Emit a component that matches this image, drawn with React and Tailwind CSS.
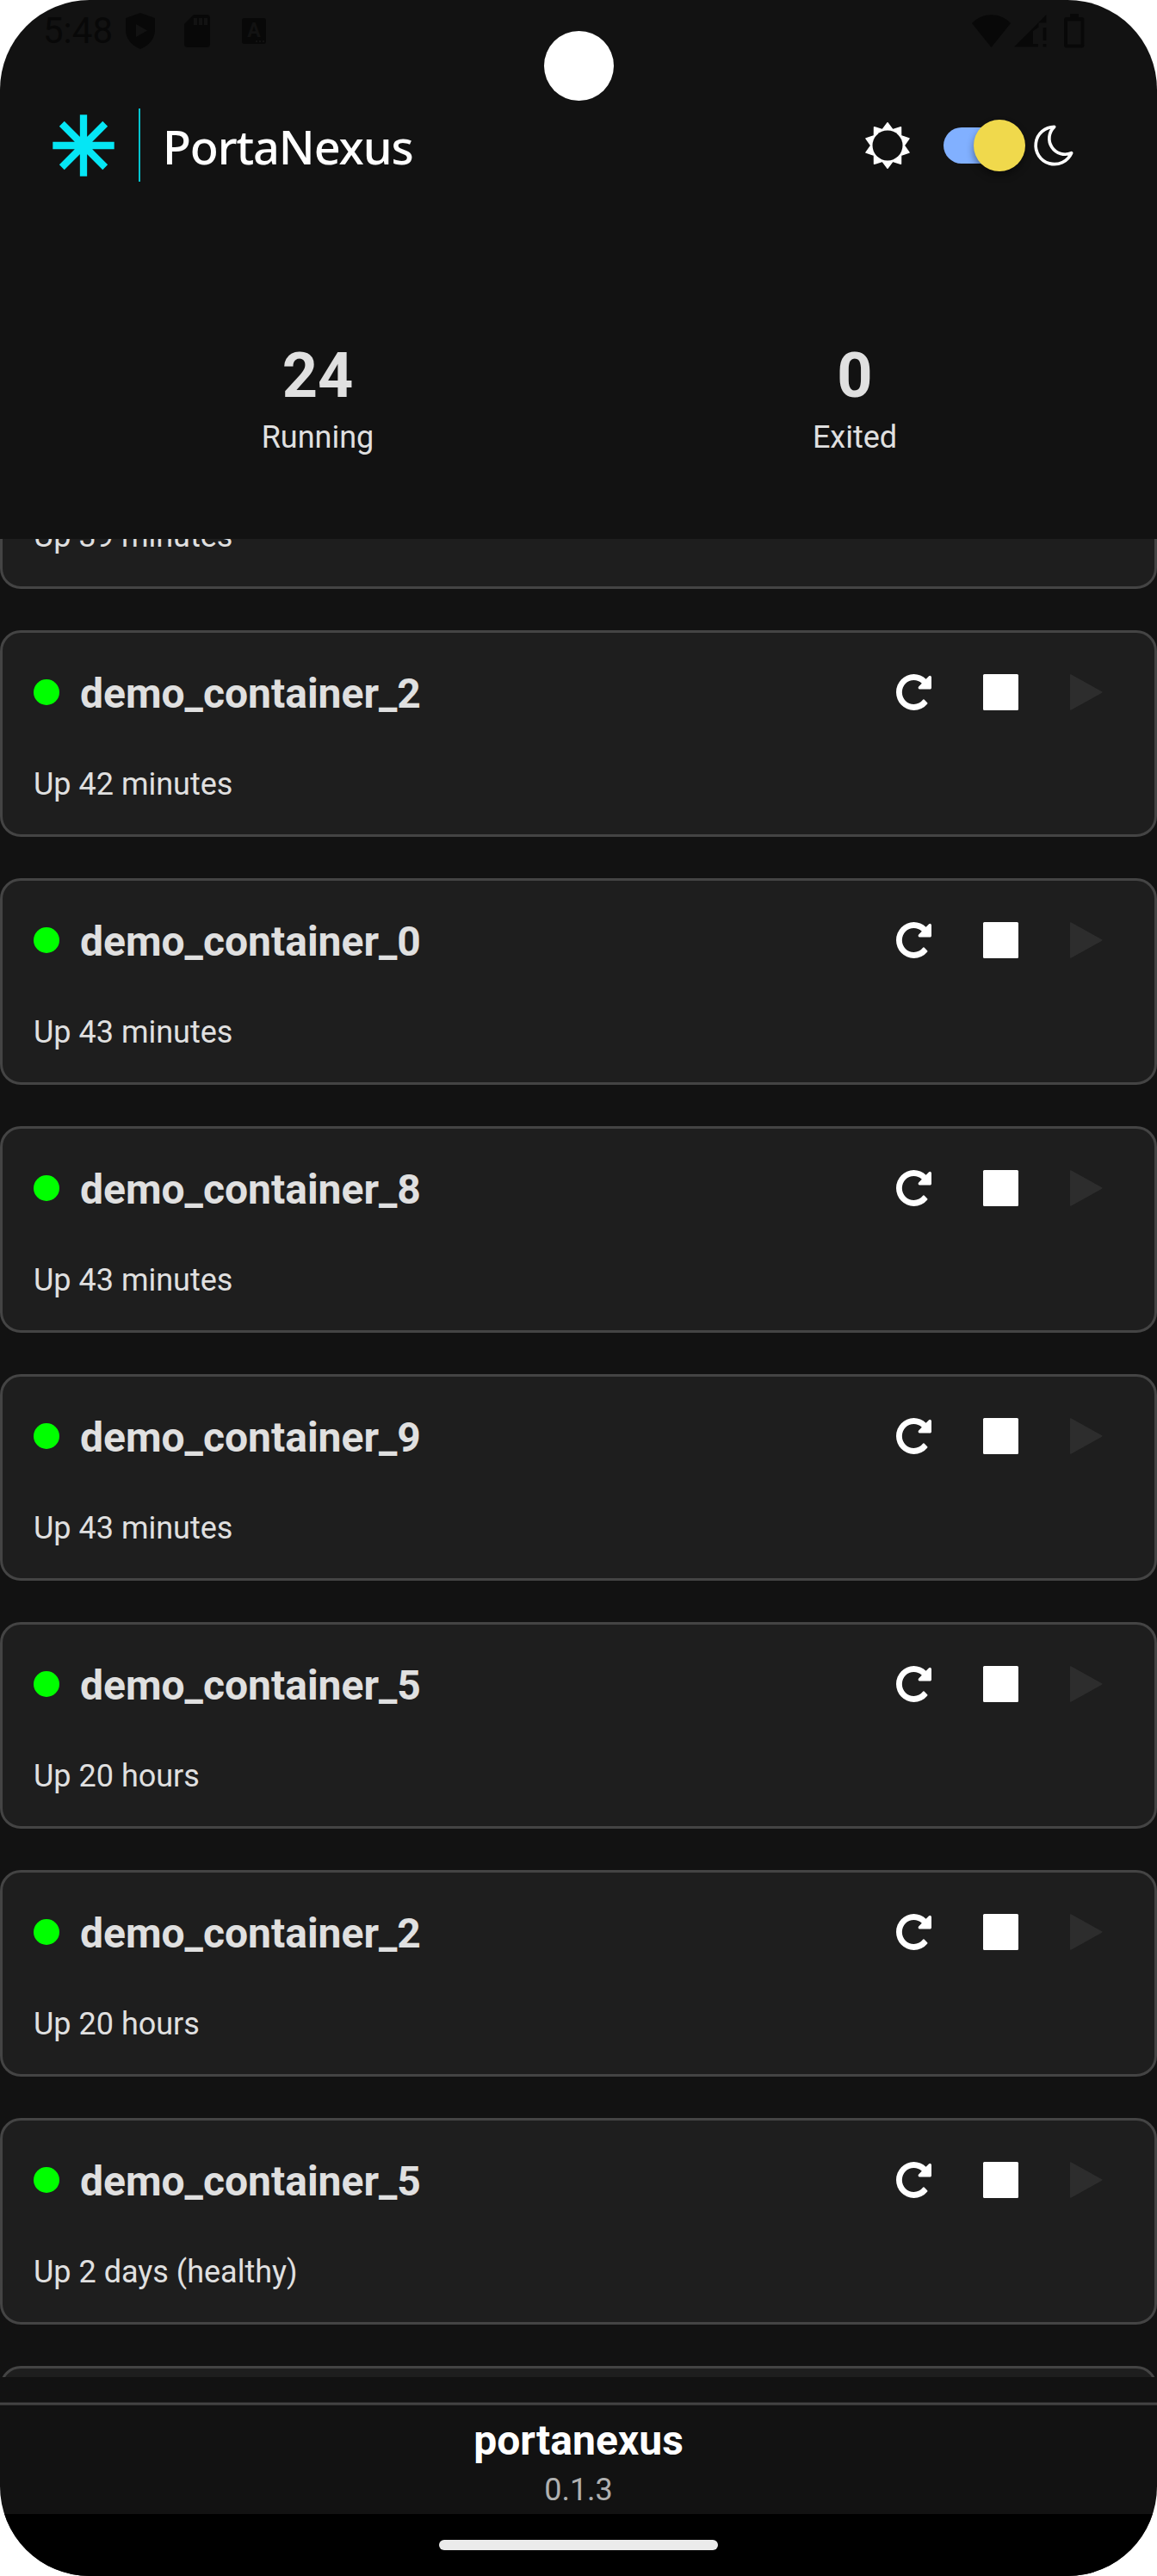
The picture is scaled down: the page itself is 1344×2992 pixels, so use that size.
import React from "react";

const containers = [
  { name: "demo_container_1", status: "Up 39 minutes" },
  { name: "demo_container_2", status: "Up 42 minutes" },
  { name: "demo_container_0", status: "Up 43 minutes" },
  { name: "demo_container_8", status: "Up 43 minutes" },
  { name: "demo_container_9", status: "Up 43 minutes" },
  { name: "demo_container_5", status: "Up 20 hours" },
  { name: "demo_container_2", status: "Up 20 hours" },
  { name: "demo_container_5", status: "Up 2 days (healthy)" },
];

function StatusBar() {
  return (
    <div className="flex h-[72px] shrink-0 items-center justify-between pr-[84px] pl-[50px] text-[#080808]">
      <div className="flex h-full items-center">
        <span className="w-[96px] text-[42px] leading-[72px]">5:48</span>
        <svg className="h-[42px] w-[34px]" viewBox="0 0 34 42" fill="currentColor">
          <path
            fillRule="evenodd"
            d="M17 0 34 6V20C34 30 27 38 17 42 7 38 0 30 0 20V6ZM12 13V28L25 20.500Z"
          />
        </svg>
        <svg className="ml-[34px] h-[38px] w-[30px]" viewBox="0 0 30 38" fill="currentColor">
          <path
            fillRule="evenodd"
            d="M11 0H26a4 4 0 0 1 4 4V34a4 4 0 0 1-4 4H4a4 4 0 0 1-4-4V11ZM11 4V12H15V4ZM17 4V12H21V4ZM23 4V12H27V4Z"
          />
        </svg>
        <span className="relative ml-[37px] flex h-[30px] w-[28px] items-start justify-center rounded-[3px] bg-[#080808] text-[23px] leading-[30px] font-bold text-[#121212]">
          A
          <span className="absolute right-[2px] bottom-[2px] flex gap-[2px]">
            <i className="size-[2px] bg-[#121212]" />
            <i className="size-[2px] bg-[#121212]" />
            <i className="size-[2px] bg-[#121212]" />
          </span>
        </span>
      </div>
      <div className="flex items-center">
        <svg className="h-[38px] w-[45px]" viewBox="0 0 45 38" fill="currentColor">
          <path d="M0 10C12-3 33-3 45 10L22.500 38Z" />
        </svg>
        <svg className="ml-[4px] h-[38px] w-[38px]" viewBox="0 0 38 38" fill="currentColor">
          <path d="M37.500 0V9.500H28.500V14.500L22 19V34H28V37.500H0ZM33.500 15H37.500V30H33.500ZM33.500 34H37.500V37.500H33.500Z" />
        </svg>
        <svg className="ml-[20px] h-[40px] w-[24px]" viewBox="0 0 24 40" fill="currentColor">
          <path
            fillRule="evenodd"
            d="M7 0H17V4H20.500a3 3 0 0 1 3 3V36.500a3 3 0 0 1-3 3H3a3 3 0 0 1-3-3V7a3 3 0 0 1 3-3H7ZM4 8.500V35.500H19.500V8.500Z"
          />
        </svg>
      </div>
    </div>
  );
}

function Logo() {
  return (
    <div className="flex items-center">
      <svg className="size-[72px]" viewBox="-36 -36 72 72" stroke="#05e6f5" strokeWidth="8.300">
        <path d="M0-35.700V35.700M-35.700 0H35.700M-25.200-25.200 25.200 25.200M-25.200 25.200 25.200-25.200" />
      </svg>
      <div className="ml-[28px] h-[85px] w-[2px] bg-[#04c3cf]" />
      <span className="ml-[26px] pt-[3px] font-['Noto_Sans'] text-[54px] leading-[64px] font-medium tracking-[-1.1px] text-white">
        PortaNexus
      </span>
    </div>
  );
}

const sunPoints = Array.from({ length: 20 }, (_, i) => {
  const r = i % 2 === 0 ? 26.3 : 19.2;
  const a = (i * Math.PI) / 10;
  return `${(r * Math.sin(a)).toFixed(2)},${(-r * Math.cos(a)).toFixed(2)}`;
}).join(" ");

function ThemeSwitch() {
  return (
    <div className="flex items-center">
      <svg className="size-[56px]" viewBox="-28 -28 56 56">
        <polygon points={sunPoints} fill="#fff" stroke="#fff" strokeWidth="1.500" strokeLinejoin="round" />
        <circle r="17.500" fill="#121212" />
      </svg>
      <div className="ml-[37px] flex h-[42px] w-[95px] items-center justify-end rounded-full bg-gradient-to-r from-[#81b0ff] from-80% to-transparent to-80%">
        <div className="size-[60px] shrink-0 rounded-full bg-[#f0d94c] shadow-[0_5px_8px_rgba(0,0,0,0.4)]" />
      </div>
      <svg
        className="ml-[9px] h-[50px] w-[48px]"
        viewBox="630 71 144 150"
        fill="none"
        stroke="#fff"
        strokeWidth="11"
        strokeLinejoin="round"
      >
        <path d="M704 81A65 65 0 1 0 764 172A55.300 55.300 0 0 1 704 81Z" />
      </svg>
    </div>
  );
}

function Stat({ value, label }) {
  return (
    <div className="flex flex-col items-center text-[#e0e0e0]">
      <span className="text-[72px] leading-[84px] font-bold">{value}</span>
      <span className="mt-[8px] text-[36px] leading-[42px]">{label}</span>
    </div>
  );
}

function RestartIcon() {
  return (
    <svg className="h-[42px] w-[41px]" viewBox="128 128 1536 1536" preserveAspectRatio="none" fill="#fff">
      <path d="M1664 256v448q0 26-19 45t-45 19h-448q-42 0-59-40-17-39 14-69l138-138q-148-137-349-137-104 0-198.500 40.500t-163.500 109.500-109.500 163.500-40.500 198.500 40.500 198.500 109.500 163.500 163.500 109.500 198.500 40.500q119 0 225-52t179-147q7-10 23-12 15 0 25 9l137 138q9 8 9.500 20.500t-7.500 22.500q-109 132-264 204.500t-327 72.500q-156 0-298-61t-245-164-164-245-61-298 61-298 164-245 245-164 298-61q147 0 284.500 55.500t244.500 156.500l130-129q29-31 70-14 39 17 39 59z" />
    </svg>
  );
}

function ContainerCard({ name, status }) {
  return (
    <div className="h-[240px] shrink-0 rounded-[24px] border-[3px] border-[#444444] bg-[#1e1e1e] px-[36px] pt-[42px] text-[#e0e0e0]">
      <div className="flex h-[56px] items-center">
        <div className="mb-[2px] size-[30px] rounded-full bg-[#00ff00]" />
        <span className="mt-[2px] ml-[24px] text-[48px] leading-[56px] font-bold">{name}</span>
        <div className="mr-[24px] mb-[2px] ml-auto flex items-center gap-[60px]">
          <RestartIcon />
          <div className="h-[42px] w-[41px] rounded-[1.500px] bg-white" />
          <svg className="h-[42px] w-[38px]" viewBox="0 0 38 42" fill="#2d2d2d">
            <path d="M0 1Q0 0 1 .3L37 20.300Q38 21 37 21.700L1 41.700Q0 42 0 41Z" />
          </svg>
        </div>
      </div>
      <div className="mt-[57px] text-[36px] leading-[42px]">{status}</div>
    </div>
  );
}

export default function App() {
  return (
    <div className="h-[2992px] w-[1344px] bg-white font-[Roboto,sans-serif]">
      <div className="relative flex h-full flex-col overflow-hidden rounded-[104px] bg-[#121212]">
        <StatusBar />
        <div className="absolute top-[36px] left-[632px] size-[81px] rounded-full bg-white" />

        <header className="flex h-[193px] shrink-0 items-center justify-between pr-[96px] pl-[61px]">
          <Logo />
          <ThemeSwitch />
        </header>

        <section className="ml-[57px] grid h-[361px] w-[1248px] shrink-0 grid-cols-2 pt-[130px]">
          <Stat value="24" label="Running" />
          <Stat value="0" label="Exited" />
        </section>

        <main className="h-[2135px] shrink-0 overflow-hidden">
          <div className="-mt-[182px] flex flex-col gap-[48px]">
            {containers.map((c, i) => (
              <ContainerCard key={i} name={c.name} status={c.status} />
            ))}
            <div className="h-[240px] shrink-0 rounded-[24px] border-[3px] border-[#444444] bg-[#1e1e1e]" />
          </div>
        </main>

        <footer className="mt-[29px] flex h-[130px] shrink-0 flex-col items-center">
          <div className="h-[4px] w-full border-y border-[#2c2c2c] bg-[#444444]" />
          <span className="mt-[13px] text-[48px] leading-[56px] font-bold text-white">portanexus</span>
          <span className="mt-[8px] text-[36px] leading-[42px] text-[#b0b0b0]">0.1.3</span>
        </footer>

        <div className="flex h-[72px] shrink-0 items-center justify-center bg-black">
          <div className="h-[12px] w-[324px] rounded-full bg-[#ebebeb]" />
        </div>
      </div>
    </div>
  );
}
